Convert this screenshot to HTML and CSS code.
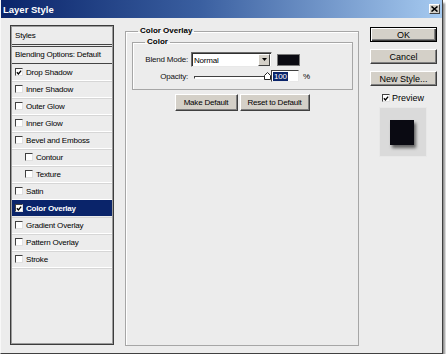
FILE: index.html
```html
<!DOCTYPE html>
<html lang="en">
<head>
    <meta charset="UTF-8">
    <title>Layer Style</title>
    <link rel="stylesheet" href="styles.css">
</head>
<body>
    <div class="dialog">
        <div class="titlebar">
            <span class="title">Layer Style</span>
            <span class="close-btn">
                <svg width="7" height="6" viewBox="0 0 7 6"><path d="M0.5 0.5 L6.5 5.5 M6.5 0.5 L0.5 5.5" stroke="#000" stroke-width="1.6"/></svg>
            </span>
        </div>
        <div class="content">
            <div class="styles-list">
                <div class="list-head">Styles</div>
                <div class="list-blend">Blending Options: Default</div>
                <div class="item"><span class="check"><svg width="7" height="7" viewBox="0 0 7 7"><path d="M1 3.2 L2.8 5.2 L6 1.2" stroke="#000" stroke-width="1.5" fill="none"/></svg></span>Drop Shadow</div>
                <div class="item"><span class="check"></span>Inner Shadow</div>
                <div class="item"><span class="check"></span>Outer Glow</div>
                <div class="item"><span class="check"></span>Inner Glow</div>
                <div class="item"><span class="check"></span>Bevel and Emboss</div>
                <div class="item sub"><span class="check"></span>Contour</div>
                <div class="item sub"><span class="check"></span>Texture</div>
                <div class="item"><span class="check"></span>Satin</div>
                <div class="item active"><span class="check"><svg width="7" height="7" viewBox="0 0 7 7"><path d="M1 3.2 L2.8 5.2 L6 1.2" stroke="#000" stroke-width="1.5" fill="none"/></svg></span>Color Overlay</div>
                <div class="item"><span class="check"></span>Gradient Overlay</div>
                <div class="item"><span class="check"></span>Pattern Overlay</div>
                <div class="item"><span class="check"></span>Stroke</div>
            </div>

            <fieldset class="group outer">
                <legend>Color Overlay</legend>
                <fieldset class="group inner">
                    <legend>Color</legend>
                    <div class="field-row">
                        <span class="field-label">Blend Mode:</span>
                        <div class="combo">
                            <span class="combo-value">Normal</span>
                            <span class="combo-btn">
                                <svg width="5" height="3" viewBox="0 0 5 3"><path d="M0 0 H5 L2.5 3 Z" fill="#000"/></svg>
                            </span>
                        </div>
                        <div class="swatch"></div>
                    </div>
                    <div class="field-row second">
                        <span class="field-label">Opacity:</span>
                        <div class="slider">
                            <div class="track"></div>
                            <svg class="thumb" width="7" height="8" viewBox="0 0 7 8"><path d="M0.5 7.5 V3.5 L3.5 0.5 L6.5 3.5 V7.5 Z" fill="#fff" stroke="#222"/></svg>
                        </div>
                        <div class="num-input"><span class="sel">100</span></div>
                        <span class="unit">%</span>
                    </div>
                </fieldset>
                <div class="defaults">
                    <button class="btn btn-make">Make Default</button>
                    <button class="btn btn-reset">Reset to Default</button>
                </div>
            </fieldset>

            <div class="actions">
                <button class="btn big default">OK</button>
                <button class="btn big">Cancel</button>
                <button class="btn big">New Style...</button>
                <div class="preview-check">
                    <span class="check"><svg width="7" height="7" viewBox="0 0 7 7"><path d="M1 3.2 L2.8 5.2 L6 1.2" stroke="#000" stroke-width="1.5" fill="none"/></svg></span>Preview
                </div>
                <div class="preview-box">
                    <div class="preview-swatch"></div>
                </div>
            </div>
        </div>
    </div>
</body>
</html>
```

FILE: styles.css
```css
        * {
            box-sizing: border-box;
        }
        body {
            margin: 0;
            background: #ffffff;
            font-family: 'Liberation Sans', Arial, sans-serif;
            font-size: 8px;
            letter-spacing: -0.2px;
            color: #000;
        }
        .dialog {
            width: 443px;
            height: 354px;
            background: #ececec;
            border-left: 1px solid #f8f8f8;
            border-right: 1px solid #404040;
            border-bottom: 1px solid #404040;
            box-shadow: 2px 3px 2px rgba(0, 0, 0, 0.45);
        }
        .titlebar {
            height: 18px;
            display: flex;
            align-items: center;
            justify-content: space-between;
            padding: 0 2px 0 2px;
            background: linear-gradient(to right, #0a246a, #3a5fa0 45%, #a6caf0);
        }
        .title {
            color: #fff;
            font-weight: bold;
            font-size: 9.5px;
            letter-spacing: 0;
        }
        .close-btn {
            width: 11px;
            height: 10px;
            display: flex;
            align-items: center;
            justify-content: center;
            background: #d4d0c8;
            border: 1px solid;
            border-color: #fff #404040 #404040 #fff;
        }
        .content {
            display: flex;
            align-items: flex-start;
            padding: 7px 0 0 9px;
        }

        /* styles list */
        .styles-list {
            width: 104px;
            height: 320px;
            border: 1px solid #3c3c3c;
            box-shadow: inset 0 0 0 1px #9c9c9c;
            background: #ececec;
            padding: 1px;
        }
        .list-head {
            height: 18px;
            line-height: 18px;
            padding-left: 3px;
            border-bottom: 1px solid #444;
        }
        .list-blend {
            height: 18px;
            line-height: 16px;
            margin-top: 1px;
            padding-left: 3px;
            border-top: 1px solid #444;
            border-bottom: 1px solid #444;
        }
        .item {
            height: 17px;
            display: flex;
            align-items: center;
            padding-left: 3px;
            border-bottom: 1px solid #ffffff;
            box-shadow: 0 1px 0 #d6d6d6;
        }
        .item.sub {
            padding-left: 13px;
        }
        .item.active {
            background: #0a246a;
            color: #fff;
            font-weight: bold;
            border-bottom-color: #ececec;
        }
        .check {
            width: 8px;
            height: 8px;
            margin-right: 3px;
            flex: none;
            display: inline-flex;
            align-items: center;
            justify-content: center;
            background: #fff;
            border: 1px solid;
            border-color: #404040 #e0e0e0 #e0e0e0 #404040;
        }

        /* group boxes */
        .group {
            margin: 0;
            padding: 0;
            min-width: 0;
            border: 1px solid #a6a6a6;
            box-shadow: inset 1px 1px 0 #fff;
        }
        .group legend {
            padding: 0 2px;
            font-weight: bold;
            line-height: 10px;
            letter-spacing: 0;
        }
        .group.outer {
            width: 234px;
            height: 320px;
            margin-left: 11px;
            margin-top: 1px;
        }
        .group.outer > legend {
            margin-left: 12px;
        }
        .group.inner {
            height: 53px;
            margin: 1px 5px 0 6px;
            padding-top: 5px;
        }
        .group.inner > legend {
            margin-left: 12px;
        }
        .field-row {
            display: flex;
            align-items: center;
            height: 15px;
        }
        .field-row.second {
            margin-top: 3px;
            height: 12px;
        }
        .field-label {
            width: 55px;
            text-align: right;
            margin-right: 3px;
            color: #111;
        }
        .combo {
            width: 81px;
            height: 15px;
            display: flex;
            align-items: center;
            background: #fff;
            border: 1px solid;
            border-color: #6c6c6c #e8e8e8 #e8e8e8 #6c6c6c;
            box-shadow: inset 1px 1px 0 #303030;
            padding: 1px 1px 1px 2px;
        }
        .combo-value {
            flex: 1;
            padding-top: 1px;
        }
        .combo-btn {
            width: 12px;
            height: 12px;
            display: flex;
            align-items: center;
            justify-content: center;
            background: #d4d0c8;
            border: 1px solid;
            border-color: #fff #404040 #404040 #fff;
        }
        .swatch {
            width: 23px;
            height: 12px;
            margin-left: 5px;
            background: #0b0b12;
            border: 1px solid #7a7a7a;
        }
        .slider {
            position: relative;
            width: 77px;
            height: 12px;
            margin-left: 3px;
        }
        .track {
            position: absolute;
            left: 0;
            top: 6px;
            width: 73px;
            height: 3px;
            background: #fff;
            border: 1px solid;
            border-color: #404040 #fff #fff #404040;
        }
        .thumb {
            position: absolute;
            left: 70px;
            top: 2px;
        }
        .num-input {
            width: 28px;
            height: 12px;
            display: flex;
            align-items: center;
            padding-left: 1px;
            background: #fff;
            border: 1px solid;
            border-color: #404040 #e8e8e8 #e8e8e8 #404040;
        }
        .sel {
            background: #0a246a;
            color: #fff;
            line-height: 9px;
            padding: 0 1px;
        }
        .unit {
            margin-left: 4px;
        }

        /* buttons */
        .btn {
            font-family: 'Liberation Sans', Arial, sans-serif;
            font-size: 8px;
            letter-spacing: -0.2px;
            color: #000;
            background: #d4d0c8;
            border: 1px solid;
            border-color: #fff #404040 #404040 #fff;
            box-shadow: inset -1px -1px 0 #808080;
            padding: 0;
            cursor: pointer;
        }
        .defaults {
            display: flex;
            justify-content: center;
            gap: 2px;
            margin-top: 4px;
        }
        .btn-make {
            width: 63px;
            height: 17px;
        }
        .btn-reset {
            width: 70px;
            height: 17px;
        }
        .actions {
            width: 67px;
            margin-left: 11px;
            padding-top: 2px;
            display: flex;
            flex-direction: column;
        }
        .btn.big {
            height: 15px;
            font-size: 9px;
            letter-spacing: 0;
            margin-bottom: 7px;
        }
        .btn.default {
            border: 1px solid #000;
            box-shadow: inset 1px 1px 0 #fff, inset -1px -1px 0 #404040, inset -2px -2px 0 #808080;
        }
        .preview-check {
            display: flex;
            align-items: center;
            height: 10px;
            padding-left: 12px;
            font-size: 9px;
            letter-spacing: 0;
        }
        .preview-check .check {
            margin-right: 2px;
        }
        .preview-box {
            width: 48px;
            height: 50px;
            margin: 4px 0 0 9px;
            padding: 12px 0 0 10px;
            background: #dadada;
            border: 1px solid #e8e8e8;
        }
        .preview-swatch {
            width: 24px;
            height: 25px;
            background: #0a0a12;
            box-shadow: 2px 3px 3px rgba(0, 0, 0, 0.55);
        }
```
